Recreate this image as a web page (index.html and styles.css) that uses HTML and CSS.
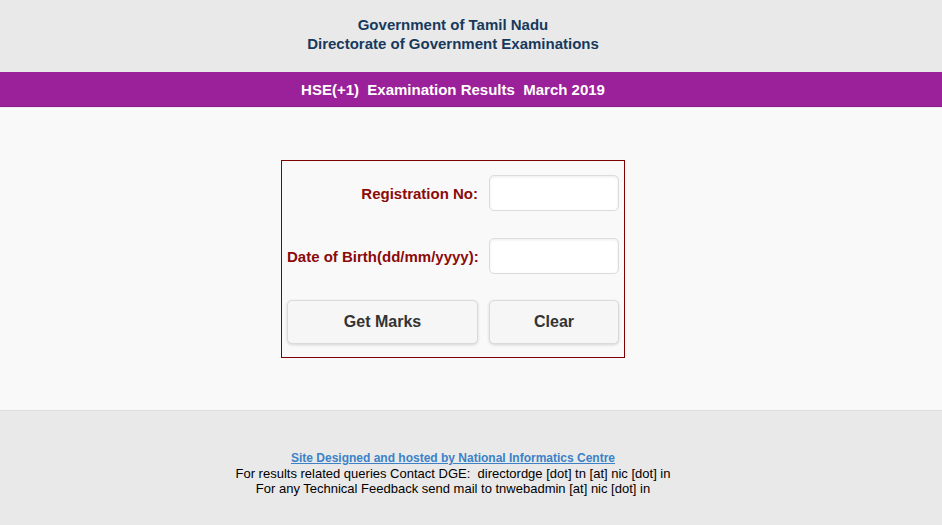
FILE: index.html
```html
<!DOCTYPE html>
<html>
<head>
<meta charset="utf-8">
<title>HSE(+1) Examination Results March 2019</title>
<link rel="stylesheet" href="styles.css">
</head>
<body>
<header class="top">
  <div class="wrap">
    <div class="org">Government of Tamil Nadu</div>
    <div class="org">Directorate of Government Examinations</div>
  </div>
</header>
<div class="band">
  <div class="wrap">HSE(+1)&nbsp; Examination Results&nbsp; March 2019</div>
</div>
<main class="content">
  <div class="wrap">
    <form class="box">
      <label class="lbl" for="reg">Registration No:</label>
      <input class="field" id="reg" type="text">
      <label class="lbl" for="dob">Date of Birth(dd/mm/yyyy):</label>
      <input class="field" id="dob" type="text">
      <button class="btn" type="button">Get Marks</button>
      <button class="btn" type="reset">Clear</button>
    </form>
  </div>
</main>
<footer class="foot">
  <div class="wrap">
    <a class="nic" href="#">Site Designed and hosted by National Informatics Centre</a>
    <div>For results related queries Contact DGE:&nbsp; directordge [dot] tn [at] nic [dot] in</div>
    <div>For any Technical Feedback send mail to tnwebadmin [at] nic [dot] in</div>
  </div>
</footer>
</body>
</html>
```
FILE: styles.css
```css
* { box-sizing: border-box; }
html, body { margin: 0; padding: 0; }
body {
  font-family: "Liberation Sans", Arial, sans-serif;
  background: #e9e9e9;
  height: 525px;
  overflow: hidden;
}
.wrap {
  width: 906px;
  text-align: center;
}
.top {
  background: #e9e9e9;
  height: 72px;
  padding-top: 15px;
}
.org {
  font-size: 15px;
  line-height: 19px;
  font-weight: bold;
  color: #17395c;
}
.band {
  background: #9b219a;
  height: 35px;
  border-bottom: 1px solid #8a1d89;
  color: #fff;
  font-weight: bold;
  font-size: 15px;
  line-height: 35px;
}
.content {
  background: #f9f9f9;
  border-top: 1px solid #f5e6f5;
  height: 303px;
  padding-top: 52px;
}
.box {
  margin: 0 auto;
  width: 344px;
  border: 1px solid #7f0000;
  display: grid;
  grid-template-columns: 191px 130px;
  grid-template-rows: 36px 36px 44px;
  column-gap: 11px;
  row-gap: 27px;
  padding: 14px 5px 12px 5px;
}
.lbl {
  text-align: right;
  font-size: 15px;
  font-weight: bold;
  color: #8b0a0a;
  align-self: center;
  white-space: nowrap;
}
.field {
  height: 36px;
  width: 130px;
  border: 1px solid #dcdcdc;
  border-radius: 5px;
  background: #fff;
  box-shadow: inset 0 1px 3px rgba(0,0,0,0.08);
  font-size: 15px;
}
.btn {
  height: 44px;
  margin-top: -1px;
  align-self: start;
  border: 1px solid #dadada;
  border-radius: 5px;
  background: #f6f6f6;
  box-shadow: 0 1px 3px rgba(0,0,0,0.15);
  font-family: "Liberation Sans", Arial, sans-serif;
  font-weight: bold;
  font-size: 16px;
  color: #333;
  padding: 0;
}
.foot {
  background: #e9e9e9;
  border-top: 1px solid #dedede;
  padding-top: 40px;
  font-size: 13px;
  line-height: 15px;
  color: #000;
}
.nic {
  display: block;
  color: #3b82c8;
  font-weight: bold;
  text-decoration: underline;
  font-size: 12px;
}
```
